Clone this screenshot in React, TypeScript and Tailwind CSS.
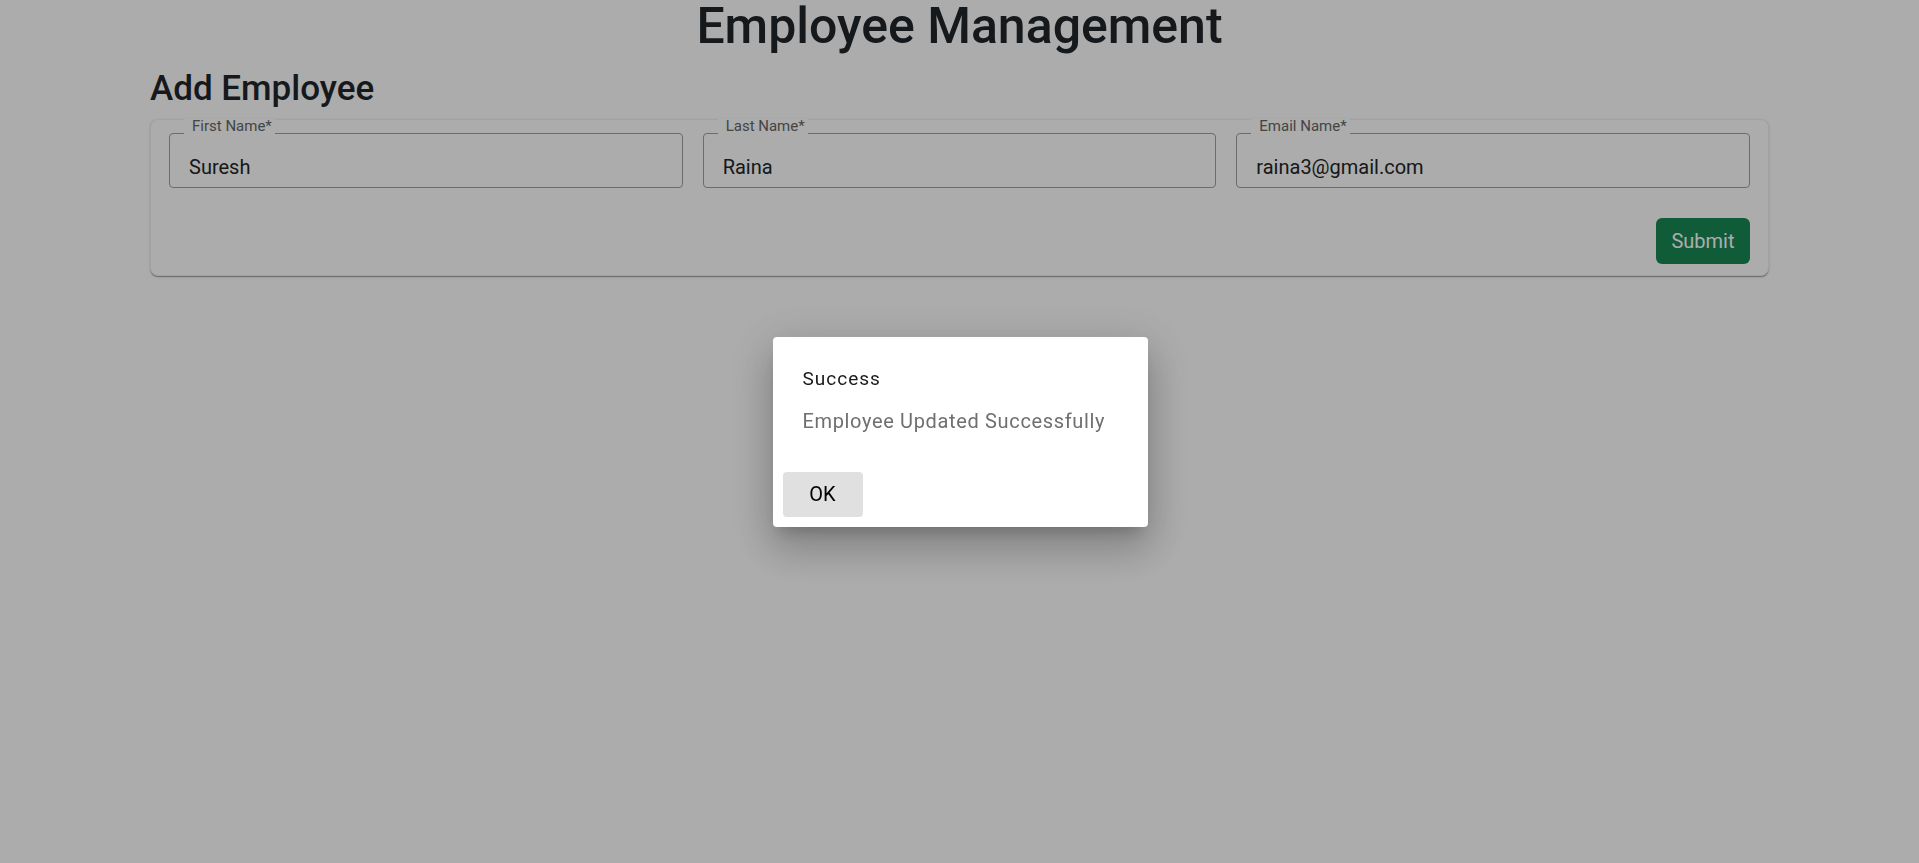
import React from "react";

function Field({ label, value }: { label: string; value: string }) {
  return (
    <div className="relative">
      <span className="absolute left-[15px] top-[-14px] bg-white pl-[8px] pr-[3px] text-[15px] leading-[15px] text-[#666666]">
        {label}
      </span>
      <input
        readOnly
        value={value}
        className="h-[55px] w-full rounded-[4px] border border-[#a0a0a0] bg-white pl-[19px] pr-[14px] pt-[13px] text-[20px] text-[#212529] outline-none"
      />
    </div>
  );
}

export default function App() {
  return (
    <div className="relative min-h-screen bg-white font-['Roboto',sans-serif]">
      <h1 className="pt-px text-center text-[50px] font-medium leading-none text-[#212529]">
        Employee Management
      </h1>
      <div className="mx-[150px]">
        <h2 className="mb-[10px] mt-[18px] text-[35px] font-medium leading-[40px] text-[#212529]">
          Add Employee
        </h2>
        <div className="rounded-lg border border-[#f0f0f0] bg-white px-[18px] pb-[11px] pt-[13px] shadow-[0_2px_1px_-1px_rgba(0,0,0,0.2),0_1px_1px_0_rgba(0,0,0,0.14),0_1px_3px_0_rgba(0,0,0,0.12)]">
          <div className="grid grid-cols-3 gap-x-[20px]">
            <Field label="First Name*" value="Suresh" />
            <Field label="Last Name*" value="Raina" />
            <Field label="Email Name*" value="raina3@gmail.com" />
          </div>
          <div className="mt-[30px] flex justify-end">
            <button className="h-[46px] w-[94px] rounded-[6px] bg-[#198754] text-[20px] text-white">
              Submit
            </button>
          </div>
        </div>
      </div>

      <div className="fixed inset-0 flex items-center justify-center bg-[rgba(0,0,0,0.325)]">
        <div className="ml-px flex w-[375px] flex-col rounded-[4px] bg-white shadow-[0_11px_15px_-7px_rgba(0,0,0,0.2),0_24px_38px_3px_rgba(0,0,0,0.14),0_9px_46px_8px_rgba(0,0,0,0.12)]">
          <div className="px-[30px] pb-[26px] pt-[28px]">
            <div className="mb-[15px] text-[19px] leading-[27px] tracking-[1px] text-[#1a1a1a]">Success</div>
            <div className="text-[20px] leading-[29px] tracking-[0.65px] text-[#6f6f6f]">
              Employee Updated Successfully
            </div>
          </div>
          <div className="p-[10px]">
            <button className="h-[45px] w-[80px] rounded-[4px] bg-[#e0e0e0] text-[20px] text-black">
              OK
            </button>
          </div>
        </div>
      </div>
    </div>
  );
}
